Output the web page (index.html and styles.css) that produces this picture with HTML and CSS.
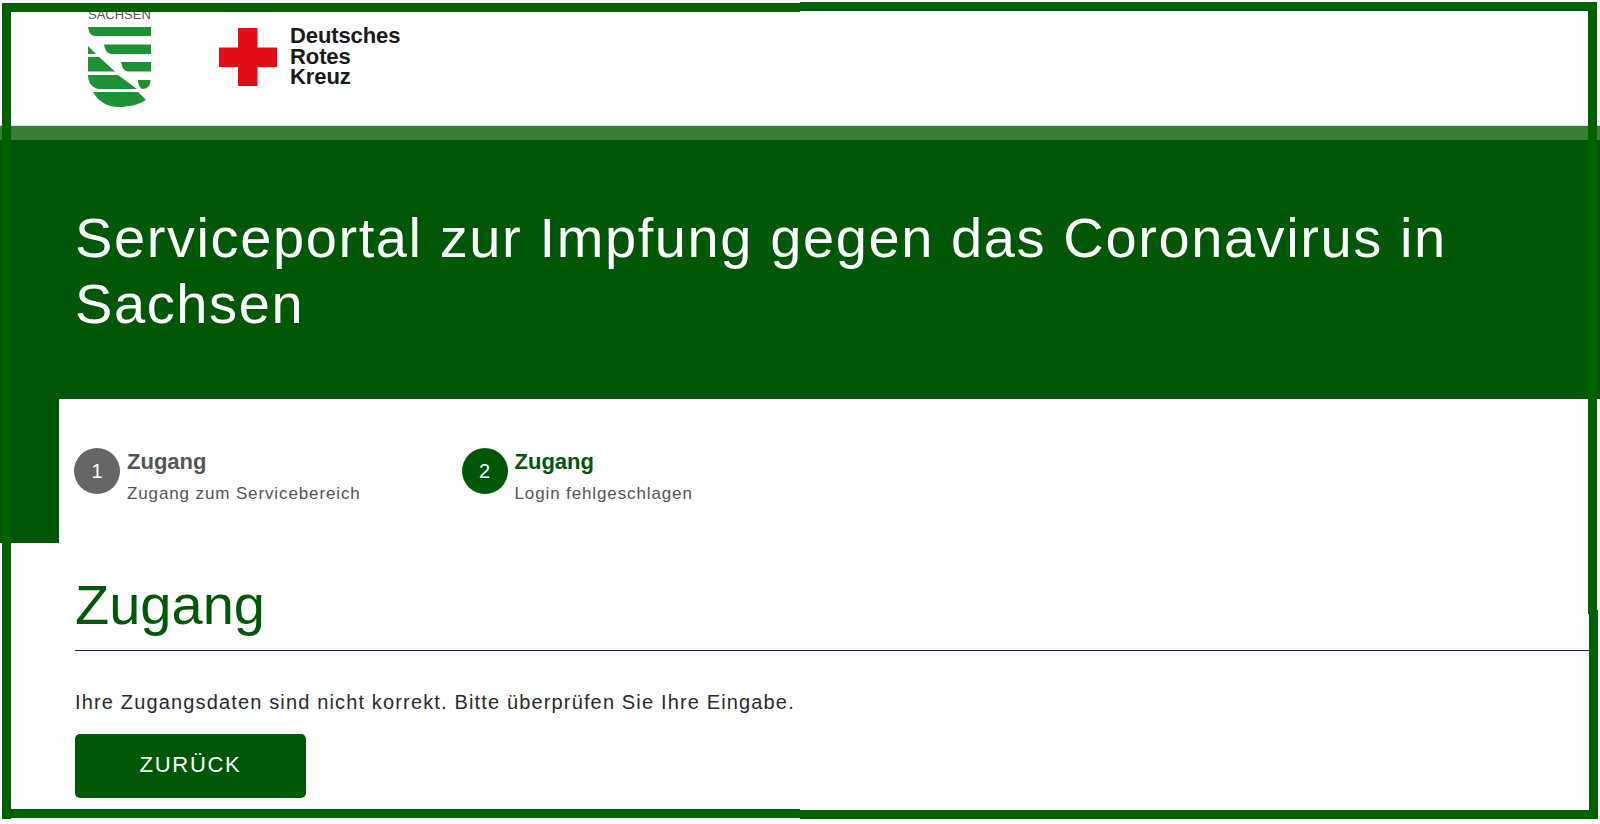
FILE: index.html
```html
<!DOCTYPE html>
<html lang="de">
<head>
<meta charset="utf-8">
<title>Serviceportal zur Impfung gegen das Coronavirus in Sachsen</title>
<link rel="stylesheet" href="styles.css">
</head>
<body>
<div class="page">
  <header class="logos">
    <div class="logo-sachsen">
      <span class="sachsen-word">SACHSEN</span>
      <svg class="shield" viewBox="0 0 63 80" aria-hidden="true">
        <g fill="#1f9135">
          <path d="M0 0H63V9H7C3 9 1 6 0 0Z"/>
          <path d="M16 17.500H63V27H24C19 27 17 23 16 17.500Z"/>
          <path d="M33 35H63V44.500H40C36 44.500 34 40 33 35Z"/>
          <path d="M50 53H62.500C62.500 58 60 62 54 62C51 60 50 57 50 53Z"/>
          <path d="M0 19L8 27H0Z"/>
          <path d="M0 30H11L27 44.500H0Z"/>
          <path d="M0 48H30L49 62H10C3 60 0 55 0 48Z"/>
          <path d="M5 65H50L58 73C50 78 40 80 31 80C19 80 10 74 5 65Z"/>
        </g>
      </svg>
    </div>
    <div class="logo-drk">
      <svg class="cross" viewBox="0 0 58 58" aria-hidden="true">
        <path fill="#e30d18" d="M19 0H38.500V19.500H58V39H38.500V58H19V39H0V19.500H19Z"/>
      </svg>
      <div class="drk-word">Deutsches<br>Rotes<br>Kreuz</div>
    </div>
  </header>
  <div class="hero-edge"></div>
  <section class="hero">
    <h1 class="hero-title">Serviceportal zur Impfung gegen das Coronavirus in Sachsen</h1>
  </section>
  <div class="stepper-row">
    <div class="side-block"></div>
    <ol class="stepper">
      <li class="step">
        <span class="step-num">1</span>
        <div>
          <div class="step-title">Zugang</div>
          <div class="step-sub">Zugang zum Servicebereich</div>
        </div>
      </li>
      <li class="step step-active">
        <span class="step-num">2</span>
        <div>
          <div class="step-title">Zugang</div>
          <div class="step-sub">Login fehlgeschlagen</div>
        </div>
      </li>
    </ol>
  </div>
  <main class="content">
    <h2 class="heading">Zugang</h2>
    <p class="message">Ihre Zugangsdaten sind nicht korrekt. Bitte überprüfen Sie Ihre Eingabe.</p>
    <a class="back-button" href="#">ZURÜCK</a>
  </main>
  <div class="frame frame-top-a"></div>
  <div class="frame frame-top-b"></div>
  <div class="frame frame-left-a"></div>
  <div class="frame frame-left-b"></div>
  <div class="frame frame-right-a"></div>
  <div class="frame frame-right-b"></div>
  <div class="frame frame-bottom-a"></div>
  <div class="frame frame-bottom-b"></div>
</div>
</body>
</html>
```
FILE: styles.css
```css
* { box-sizing: border-box; }
html, body { margin: 0; padding: 0; background: #fff; }
body { font-family: "Liberation Sans", Arial, sans-serif; color: #2b2b2b; }
.page { position: relative; width: 1600px; height: 824px; overflow: hidden; background: #fff; }

.logos { height: 126px; display: flex; align-items: flex-start; padding-left: 88px; border-bottom: 1px solid #dcdcdc; }
.logo-sachsen { width: 63px; padding-top: 9px; display: flex; flex-direction: column; }
.sachsen-word { font-size: 13px; line-height: 11px; height: 18px; color: #555; white-space: nowrap; }
.shield { width: 63px; height: 80px; display: block; }
.logo-drk { display: flex; margin-left: 68px; padding-top: 28px; gap: 13px; }
.cross { width: 58px; height: 58px; display: block; }
.drk-word { font-size: 22px; line-height: 20.5px; font-weight: 700; color: #1a1a1a; margin-top: -2px; letter-spacing: -.1px; }

.hero-edge { height: 14px; background: #3a7d34; }
.hero { height: 259px; background: #005708; padding: 65px 150px 0 75px; }
.hero-title { margin: 0; font-size: 56px; line-height: 66px; font-weight: 400; color: #fff; letter-spacing: 1.6px; }

.stepper-row { display: flex; height: 144px; }
.side-block { width: 59px; background: #005708; }
.stepper { list-style: none; margin: 0; padding: 49px 0 0 15px; display: flex; align-items: flex-start; }
.step { width: 387.500px; display: flex; gap: 7px; color: #555; }
.step-num { width: 46px; height: 46px; border-radius: 50%; background: #666; color: #fff; font-size: 20px; display: flex; align-items: center; justify-content: center; }
.step-title { font-size: 22px; line-height: 24px; font-weight: 700; margin-top: 2px; }
.step-sub { font-size: 17px; line-height: 22px; margin-top: 9px; letter-spacing: .88px; }
.step-active .step-num { background: #005708; }
.step-active .step-title { color: #005708; }

.content { padding: 30px 11px 0 75px; }
.heading { margin: 0; font-size: 56px; line-height: 64px; font-weight: 400; color: #005708; padding-bottom: 13px; border-bottom: 1px solid #28285a; }
.message { margin: 38px 0 0; font-size: 20px; line-height: 26px; letter-spacing: 1.15px; color: #2b2b2b; }
.back-button { margin-top: 19px; width: 231px; height: 64px; padding-bottom: 2px; display: flex; align-items: center; justify-content: center; background: #005708; color: #fff; border-radius: 5px; font-size: 22px; letter-spacing: 1.7px; text-decoration: none; }

.frame { position: absolute; background: #006100; }
.frame-top-a { left: 2px; top: 3px; width: 798px; height: 9px; }
.frame-top-b { left: 800px; top: 2px; width: 797px; height: 9px; }
.frame-left-a { left: 2px; top: 3px; width: 9px; height: 137px; }
.frame-left-b { left: 2px; top: 140px; width: 9px; height: 679px; }
.frame-right-a { left: 1588px; top: 2px; width: 9px; height: 612px; }
.frame-right-b { left: 1589px; top: 610px; width: 9px; height: 209px; }
.frame-bottom-a { left: 2px; top: 809px; width: 798px; height: 9px; }
.frame-bottom-b { left: 800px; top: 810px; width: 798px; height: 9px; }
```
